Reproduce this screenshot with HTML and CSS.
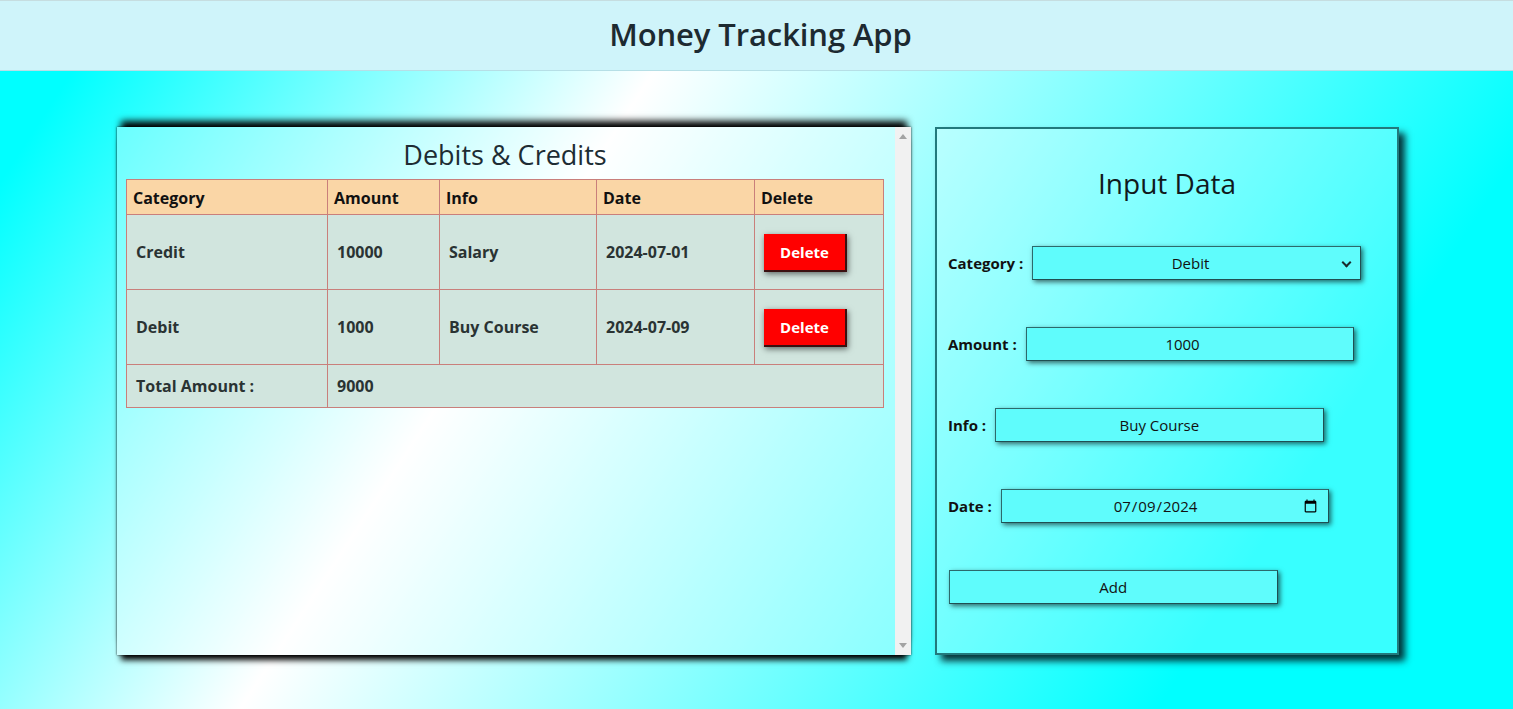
FILE: index.html
```html
<!DOCTYPE html>
<html lang="en">
<head>
<meta charset="utf-8">
<title>Money Tracking App</title>
<link rel="stylesheet" href="styles.css">
</head>
<body>
<header class="topbar">
  <h1 class="app-title">Money Tracking App</h1>
</header>
<main class="main">
  <section class="card list-card">
    <div class="list-body">
      <h2 class="card-title">Debits &amp; Credits</h2>
      <table class="ledger">
        <thead>
          <tr>
            <th class="c-cat">Category</th>
            <th class="c-amt">Amount</th>
            <th class="c-info">Info</th>
            <th class="c-date">Date</th>
            <th class="c-del">Delete</th>
          </tr>
        </thead>
        <tbody>
          <tr class="data-row">
            <td>Credit</td>
            <td>10000</td>
            <td>Salary</td>
            <td>2024-07-01</td>
            <td><button class="del-btn" type="button">Delete</button></td>
          </tr>
          <tr class="data-row">
            <td>Debit</td>
            <td>1000</td>
            <td>Buy Course</td>
            <td>2024-07-09</td>
            <td><button class="del-btn" type="button">Delete</button></td>
          </tr>
          <tr class="total-row">
            <td>Total Amount :</td>
            <td colspan="4">9000</td>
          </tr>
        </tbody>
      </table>
    </div>
    <div class="scrollbar" aria-hidden="true">
      <span class="arrow arrow-up"></span>
      <span class="arrow arrow-down"></span>
    </div>
  </section>
  <section class="card form-card">
    <h2 class="form-title">Input Data</h2>
    <form class="entry-form">
      <div class="form-row">
        <label class="lbl" for="cat">Category :</label>
        <span class="field select-wrap">
          <select id="cat" class="select-inner">
            <option>Credit</option>
            <option selected>Debit</option>
          </select>
        </span>
      </div>
      <div class="form-row">
        <label class="lbl" for="amt">Amount :</label>
        <input id="amt" class="field" type="number" value="1000">
      </div>
      <div class="form-row">
        <label class="lbl" for="info">Info :</label>
        <input id="info" class="field" type="text" value="Buy Course">
      </div>
      <div class="form-row">
        <label class="lbl" for="date">Date :</label>
        <input id="date" class="field" type="date" value="2024-07-09">
      </div>
      <div class="form-row">
        <button class="field add-btn" type="button">Add</button>
      </div>
    </form>
  </section>
</main>
</body>
</html>
```
FILE: styles.css
```css
html, body {
  margin: 0;
  padding: 0;
  height: 100%;
}
body {
  font-family: "Open Sans", "Noto Sans", sans-serif;
  color: #1c2a31;
  background: linear-gradient(123deg, #00ffff 6%, #ffffff 35.5%, #00ffff 82%);
  overflow: hidden;
}
.topbar {
  height: 69px;
  background: #cff4fa;
  border-top: 1px solid #c6dde0;
  border-bottom: 1px solid #b6dfe6;
  display: flex;
  align-items: center;
  justify-content: center;
}
.app-title {
  margin: 0 0 3px;
  font-size: 31px;
  font-weight: 600;
  letter-spacing: -0.1px;
  color: #1d2a31;
  transform: translateX(4px);
}
.main {
  display: flex;
  justify-content: center;
  gap: 24px;
  padding-top: 56px;
  padding-left: 3px;
}
.card {
  box-sizing: border-box;
  height: 528px;
}
.list-card {
  width: 794px;
  display: flex;
  background: rgba(255, 255, 255, 0.32);
  box-shadow: 0 -10px 7px -4px #000, 0 9px 6px -4px #000, 0 0 2px rgba(0,0,0,0.8);
}
.list-body {
  flex: 1;
  min-width: 0;
  overflow: hidden;
  padding: 0 11px 0 9px;
}
.scrollbar {
  width: 16px;
  flex: none;
  background: #f1f1f1;
  display: flex;
  flex-direction: column;
  justify-content: space-between;
  align-items: center;
  padding: 7px 0 7px;
  box-sizing: border-box;
}
.arrow {
  width: 0;
  height: 0;
  border-left: 4px solid transparent;
  border-right: 4px solid transparent;
}
.arrow-up {
  border-bottom: 5px solid #a3a3a3;
}
.arrow-down {
  border-top: 5px solid #a3a3a3;
}
.card-title {
  margin: 11px 0 8px;
  text-align: center;
  font-size: 27px;
  font-weight: 500;
  line-height: 33px;
  color: #1d2c33;
}
.ledger {
  width: 100%;
  border-collapse: collapse;
  font-size: 16px;
  font-weight: 700;
}
.ledger th, .ledger td {
  border: 1px solid #c97f7b;
  text-align: left;
}
.ledger th {
  background: #fad6a6;
  color: #111;
  padding: 7px 6px 5px;
  height: 22px;
}
.ledger td {
  background: #d1e5de;
  color: #2a3333;
  padding: 0 9px;
}
.c-cat { width: 188px; }
.c-amt { width: 99px; }
.c-info { width: 144px; }
.c-date { width: 145px; }
.data-row td {
  height: 74px;
}
.total-row td {
  height: 42px;
}
.del-btn {
  width: 83px;
  height: 38px;
  background: #ff0000;
  color: #fff;
  font-family: inherit;
  font-size: 15px;
  font-weight: 700;
  border: none;
  border-right: 2px solid #3a1010;
  border-bottom: 2px solid #3a1010;
  box-shadow: 1px 2px 6px rgba(0, 0, 0, 0.55);
  margin-top: 1px;
}
.form-card {
  width: 464px;
  border: 2px solid #22797c;
  background: rgba(255, 255, 255, 0.22);
  box-shadow: 6px 6px 7px rgba(0, 30, 35, 0.9);
  padding: 0 11px;
}
.form-title {
  margin: 36px 0 0;
  text-align: center;
  font-size: 28px;
  font-weight: 500;
  line-height: 36px;
  color: #10191c;
}
.entry-form {
  margin-top: 45px;
  display: flex;
  flex-direction: column;
  gap: 47px;
}
.form-row {
  display: flex;
  align-items: center;
  gap: 9px;
  height: 34px;
}
.lbl {
  font-size: 15px;
  font-weight: 700;
  color: #111;
  white-space: nowrap;
}
.field {
  box-sizing: border-box;
  width: 75%;
  height: 34px;
  flex: none;
  background: #5ffcfc;
  border: 1px solid #1f4f52;
  border-top-color: #2b6a6c;
  border-left-color: #2b6a6c;
  box-shadow: 2px 2px 5px rgba(0, 0, 0, 0.6);
  font-family: inherit;
  font-size: 15px;
  color: #111;
  text-align: center;
  padding: 0 8px;
  margin: 0;
  border-radius: 0;
}
.select-wrap {
  position: relative;
  display: block;
  padding: 0;
}
.select-inner {
  appearance: none;
  -webkit-appearance: none;
  width: 100%;
  height: 100%;
  border: none;
  background: transparent;
  font-family: inherit;
  font-size: 15px;
  color: #111;
  text-align: center;
  text-align-last: center;
  padding: 0 20px 0 8px;
  outline: none;
}
.select-wrap::after {
  content: "";
  position: absolute;
  right: 10px;
  top: 12px;
  width: 5px;
  height: 5px;
  border-right: 2px solid #1a2a2c;
  border-bottom: 2px solid #1a2a2c;
  transform: rotate(45deg);
  pointer-events: none;
}
.add-btn {
  margin-left: 1px;
}
```
